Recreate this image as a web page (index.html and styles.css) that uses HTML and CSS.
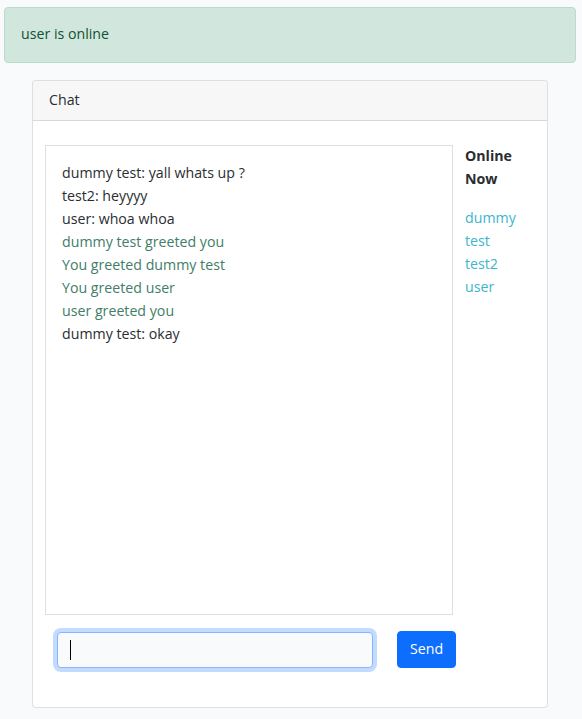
FILE: index.html
```html
<!DOCTYPE html>
<html lang="en">
<head>
<meta charset="utf-8">
<title>Chat</title>
<link rel="stylesheet" href="styles.css">
</head>
<body>
  <div class="alert">user is online</div>
  <div class="card">
    <div class="card-header">Chat</div>
    <div class="card-body">
      <div class="chat-row">
        <div class="chat-box">
          <div class="msg">dummy test: yall whats up ?</div>
          <div class="msg">test2: heyyyy</div>
          <div class="msg">user: whoa whoa</div>
          <div class="msg greet">dummy test greeted you</div>
          <div class="msg greet">You greeted dummy test</div>
          <div class="msg greet">You greeted user</div>
          <div class="msg greet">user greeted you</div>
          <div class="msg">dummy test: okay</div>
        </div>
        <div class="online">
          <div class="online-title">Online Now</div>
          <div class="online-list">
            <div class="user">dummy test</div>
            <div class="user">test2</div>
            <div class="user">user</div>
          </div>
        </div>
      </div>
      <div class="form-row">
        <div class="input-wrap">
          <input class="form-control" type="text">
          <span class="caret"></span>
        </div>
        <button class="btn">Send</button>
      </div>
    </div>
  </div>
</body>
</html>
```
FILE: styles.css
```css
* { box-sizing: border-box; }
html, body { margin: 0; }
body {
  background: #f8fafc;
  font-family: "Open Sans", "Noto Sans", sans-serif;
  font-size: 14.2px;
  line-height: 23px;
  color: #2a2d31;
  padding: 7px 6px 11px 4px;
}
.alert {
  background: #d1e7dd;
  border: 1px solid #badbcc;
  color: #0f5132;
  border-radius: 4px;
  padding: 15px 16px 17px;
  line-height: 22px;
  margin-bottom: 17px;
}
.card {
  margin: 0 28px;
  background: #fff;
  border: 1px solid rgba(0,0,0,.125);
  border-radius: 4px;
}
.card-header {
  background: #f7f7f7;
  border-bottom: 1px solid rgba(0,0,0,.125);
  padding: 7px 16px 9px;
  border-radius: 4px 4px 0 0;
}
.card-body {
  padding: 24px 12px 39px 12px;
}
.chat-row {
  display: flex;
  gap: 12px;
}
.chat-box {
  width: 408px;
  height: 470px;
  border: 1px solid #dcdfe3;
  padding: 15px 16px 17px;
}
.greet { color: #417d69; }
.online {
  width: 70px;
  margin-top: -1px;
}
.online-title {
  font-weight: 700;
  width: 60px;
}
.online-list {
  margin-top: 16px;
}
.user { color: #3db5cd; }
.form-row {
  display: flex;
  align-items: center;
  gap: 24px;
  margin-top: 16px;
  padding-left: 12px;
}
.input-wrap {
  position: relative;
  width: 316px;
}
.form-control {
  display: block;
  width: 316px;
  height: 36px;
  padding: 6px 12px;
  font: inherit;
  background: #f8fafc;
  border: 1px solid #86b7fe;
  border-radius: 4px;
  box-shadow: 0 0 0 4px rgba(13,110,253,.25);
  outline: none;
  caret-color: transparent;
}
.caret {
  position: absolute;
  left: 13px;
  top: 8px;
  width: 1px;
  height: 20px;
  background: #000;
}
.btn {
  width: 59px;
  height: 37px;
  background: #0d6efd;
  color: #fff;
  border: 1px solid #0d6efd;
  border-radius: 4px;
  font: inherit;
  padding: 5px 12px 7px;
}
```
